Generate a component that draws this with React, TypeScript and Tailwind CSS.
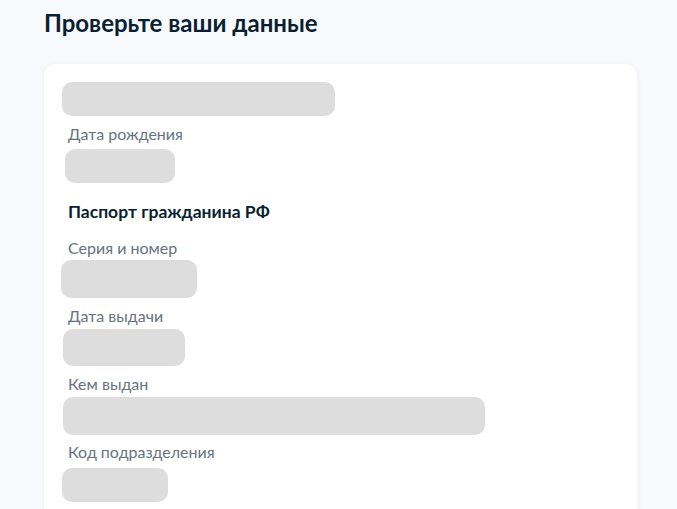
const font = { fontFamily: 'Lato, "Noto Sans", sans-serif' };

function Blur({ className }: { className: string }) {
  return <div className={`bg-[#dddddd] rounded-[10px] ${className}`} />;
}

function Label({ children, className = '' }: { children: string; className?: string }) {
  return <div className={`text-[16px] leading-5 text-[#66727f] pl-6 ${className}`}>{children}</div>;
}

export default function App() {
  return (
    <div style={font} className="min-h-[509px] w-full bg-[#f8f9fc] pl-11 pr-10 overflow-hidden">
      <h1 className="pt-[8px] text-[24px] leading-[30px] font-bold text-[#0b1f33]">Проверьте ваши данные</h1>
      <div className="mt-[26px] bg-white rounded-xl shadow-[0_1px_6px_rgba(40,60,100,0.05)] pt-[18px] pb-8">
        <Blur className="ml-[18px] w-[273px] h-[34px]" />
        <Label className="mt-[8px]">Дата рождения</Label>
        <Blur className="ml-[21px] mt-[5px] w-[110px] h-[34px]" />
        <div className="mt-[18px] pl-6 text-[17.5px] leading-[22px] font-bold text-[#0b1f33]">Паспорт гражданина РФ</div>
        <Label className="mt-[15px]">Серия и номер</Label>
        <Blur className="ml-[17px] mt-[2px] w-[136px] h-[38px]" />
        <Label className="mt-[8px]">Дата выдачи</Label>
        <Blur className="ml-[19px] mt-[3px] w-[122px] h-[37px]" />
        <Label className="mt-[8px]">Кем выдан</Label>
        <Blur className="ml-[19px] mt-[3px] w-[422px] h-[38px]" />
        <Label className="mt-[7px]">Код подразделения</Label>
        <Blur className="ml-[18px] mt-[6px] w-[106px] h-[34px]" />
      </div>
    </div>
  );
}
